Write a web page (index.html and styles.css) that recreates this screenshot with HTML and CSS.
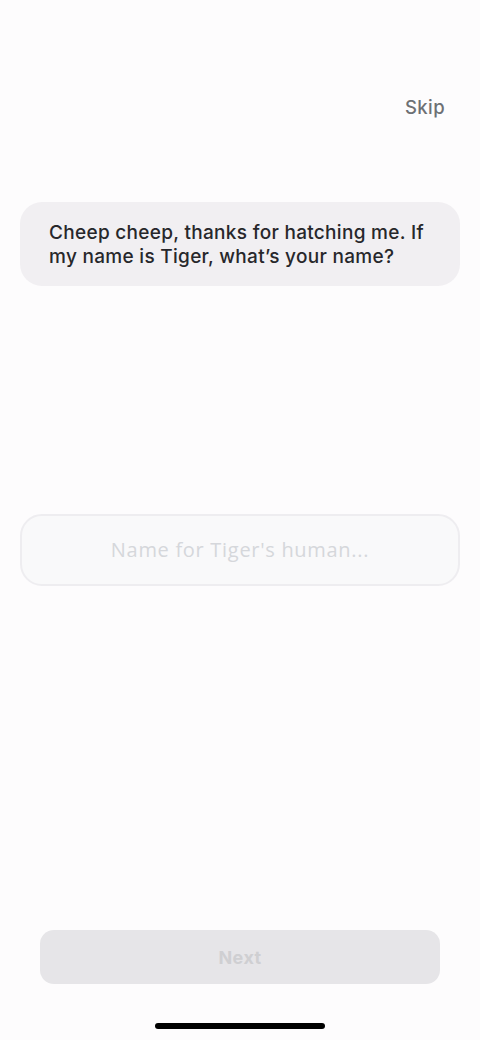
FILE: index.html
```html
<!DOCTYPE html>
<html>
<head>
<meta charset="utf-8">
<link rel="stylesheet" href="styles.css">
</head>
<body>
<div class="screen">
  <div class="topbar"><span class="skip">Skip</span></div>
  <div class="bubble">Cheep cheep, thanks for hatching me. If my name is Tiger, what’s your name?</div>
  <div class="field"><span class="placeholder">Name for Tiger's human...</span></div>
  <div class="spacer"></div>
  <div class="actions"><button class="next">Next</button></div>
  <div class="home-area"><div class="home-indicator"></div></div>
</div>
</body>
</html>
```
FILE: styles.css
```css
html, body {
  margin: 0;
  padding: 0;
  background: #fdfcfd;
}
.screen {
  width: 480px;
  height: 1040px;
  box-sizing: border-box;
  padding: 0 20px;
  display: flex;
  flex-direction: column;
  font-family: "Inter", "Noto Sans", sans-serif;
}
.topbar {
  display: flex;
  justify-content: flex-end;
  padding-top: 95px;
  padding-right: 15px;
  height: 24px;
}
.skip {
  font-size: 18.5px;
  line-height: 24px;
  font-weight: 500;
  color: #6d7074;
  letter-spacing: 0.4px;
}
.bubble {
  margin-top: 83px;
  background: #f1eff2;
  border-radius: 22px;
  padding: 19px 24px 17px 29px;
  font-size: 19px;
  line-height: 24px;
  font-weight: 500;
  color: #27272b;
  letter-spacing: 0.3px;
}
.field {
  margin-top: 228px;
  height: 72px;
  box-sizing: border-box;
  border: 2px solid #eeedf0;
  border-radius: 22px;
  background: #f9f9fa;
  display: flex;
  align-items: center;
  justify-content: center;
}
.placeholder {
  font-family: "Open Sans", "Inter", sans-serif;
  font-size: 20px;
  letter-spacing: 0.7px;
  color: #d5d7db;
  margin-top: -2px;
}
.spacer {
  flex: 1;
}
.actions {
  padding: 0 20px;
}
.next {
  width: 100%;
  height: 54px;
  border: none;
  border-radius: 14px;
  background: #e6e5e8;
  color: #cfcfd2;
  font-family: "Inter", sans-serif;
  font-size: 18px;
  font-weight: 700;
  letter-spacing: 0.4px;
  padding: 0;
}
.home-area {
  height: 56px;
  display: flex;
  justify-content: center;
  align-items: flex-start;
}
.home-indicator {
  margin-top: 39px;
  width: 170px;
  height: 6px;
  border-radius: 3px;
  background: #000;
}
```
